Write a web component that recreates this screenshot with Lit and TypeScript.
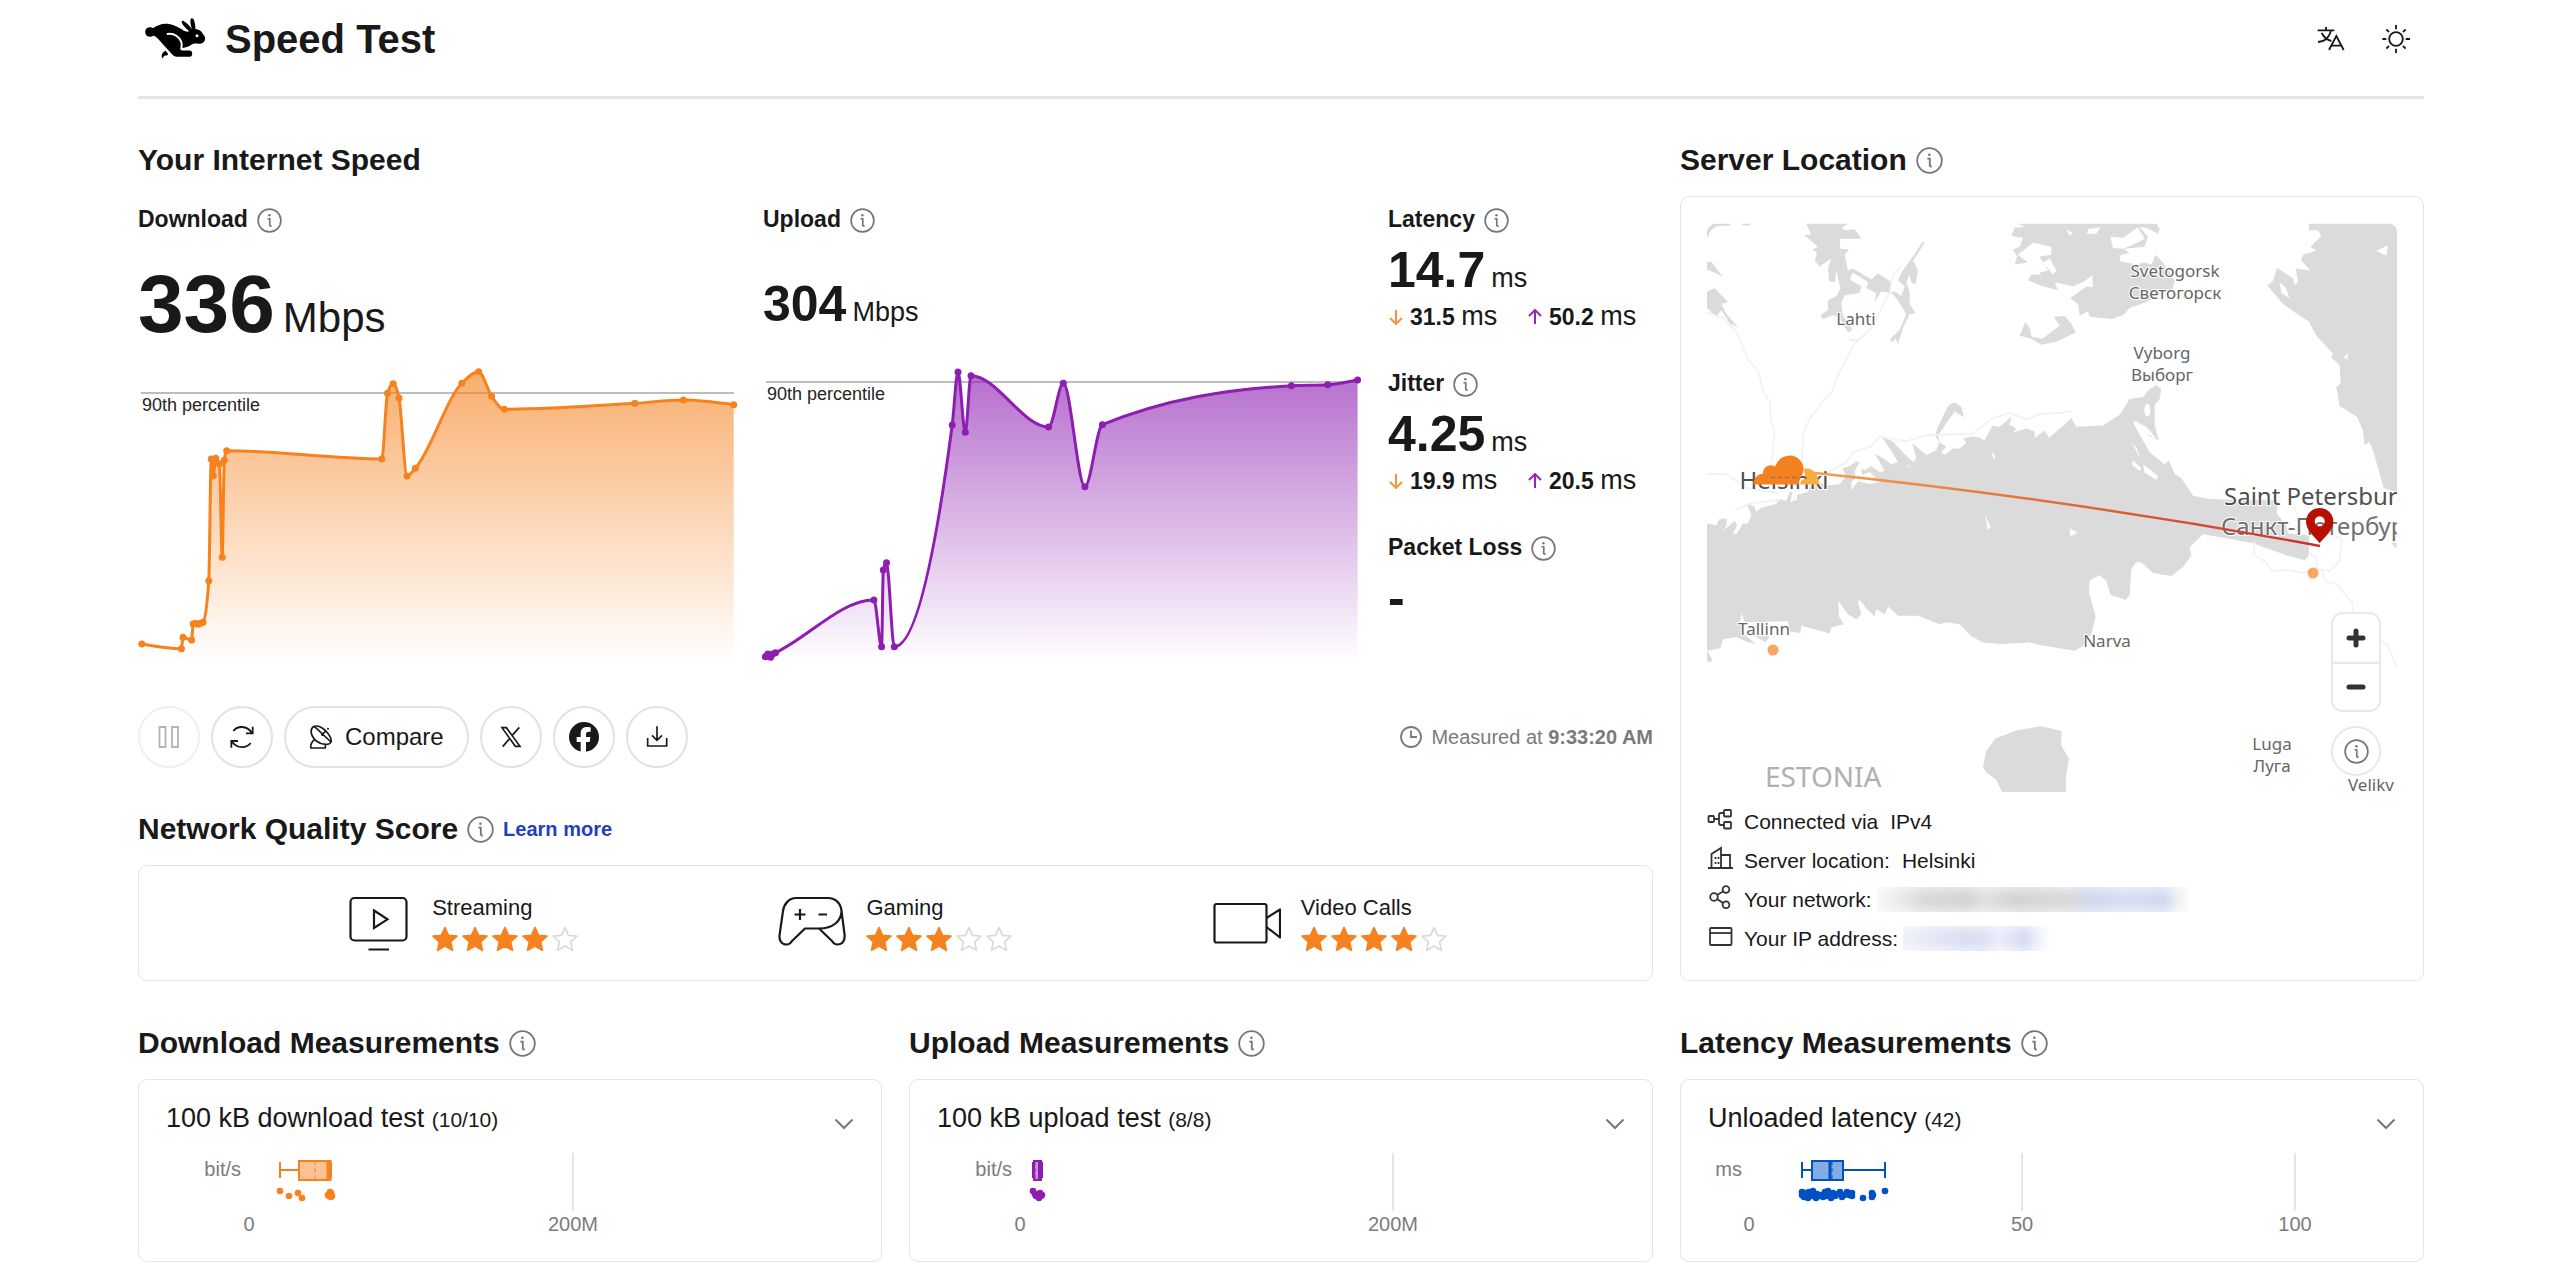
import { LitElement, html, svg, css } from "lit";
import { customElement, property } from "lit/decorators.js";

type Pt = [number, number];

/* Monotone cubic interpolation through the samples. */
function smoothPath(p: Pt[]): string {
  const n = p.length;
  const slope: number[] = [];
  for (let i = 0; i < n - 1; i++) slope.push((p[i + 1][1] - p[i][1]) / (p[i + 1][0] - p[i][0]));
  const m: number[] = new Array(n).fill(0);
  for (let i = 1; i < n - 1; i++) {
    const h0 = p[i][0] - p[i - 1][0];
    const h1 = p[i + 1][0] - p[i][0];
    const a = slope[i - 1];
    const b = slope[i];
    const mid = (a * h1 + b * h0) / (h0 + h1);
    m[i] = (Math.sign(a) + Math.sign(b)) * Math.min(Math.abs(a), Math.abs(b), 0.5 * Math.abs(mid)) || 0;
  }
  m[0] = (3 * slope[0] - m[1]) / 2;
  m[n - 1] = (3 * slope[n - 2] - m[n - 2]) / 2;
  let d = `M${p[0][0]} ${p[0][1]}`;
  for (let i = 0; i < n - 1; i++) {
    const h = (p[i + 1][0] - p[i][0]) / 3;
    d += `C${p[i][0] + h} ${p[i][1] + m[i] * h} ${p[i + 1][0] - h} ${p[i + 1][1] - m[i + 1] * h} ${p[i + 1][0]} ${p[i + 1][1]}`;
  }
  return d;
}

const DOWNLOAD: Pt[] = [
  [3.8, 278], [43.4, 282.7], [45, 271.3], [53.6, 274], [55.2, 258], [57.7, 257.3], [60.1, 258.3], [62.6, 257.3],
  [65, 256.3], [70.8, 214.7], [73.2, 93], [75.2, 109.7], [77.7, 92.3], [81.4, 98], [84.2, 191.3], [86.3, 94.3],
  [88.7, 84.7], [243.8, 93], [249.5, 27.3], [255.2, 17.7], [261, 32], [269.1, 110], [277.3, 102.3], [323.8, 17.3],
  [340.6, 5.7], [353.6, 30.3], [366.3, 43.3], [496.9, 37.3], [545.4, 34], [595.7, 38.7],
];
const UPLOAD: Pt[] = [
  [2.3, 290.7], [4.8, 288], [7.6, 291.3], [9.7, 288], [12.5, 286.7], [110.9, 234], [118.6, 280.7], [120.3, 204],
  [123.5, 196.7], [131.3, 280.7], [189.2, 59], [195, 6], [202.3, 66.3], [208, 9.7], [285.6, 61], [300.3, 17.3],
  [321.9, 120.7], [339.4, 58.7], [528.4, 19.7], [564.8, 18.7], [594.6, 14],
];

@customElement("info-button")
export class InfoButton extends LitElement {
  @property() label = "More information";
  static styles = css`
    :host { display: inline-flex; }
    .info { display: flex; width: 100%; padding: 0; border: 0; background: none; color: #767676; cursor: pointer; }
    .glyph { display: block; width: 100%; }
  `;
  render() {
    return html`<button class="info" aria-label=${this.label}>
      <svg class="glyph" viewBox="0 0 27 27" fill="none" stroke="currentColor" stroke-width="1.8">
        <circle cx="13.5" cy="13.5" r="12.3" />
        <path d="M11.3 11.6h2.5v8M13.8 19.4l2 .1" />
        <circle cx="13.4" cy="7.8" r="1.3" fill="currentColor" stroke="none" />
      </svg>
    </button>`;
  }
}

@customElement("speed-chart")
export class SpeedChart extends LitElement {
  @property({ attribute: false }) points: Pt[] = [];
  @property() color = "#f6821f";
  @property({ type: Number }) percentile = 0;
  static styles = css`
    :host { display: block; }
    .chart { display: block; width: 100%; overflow: visible; }
    .caption { font: 18px "Liberation Sans", Arial, sans-serif; fill: #262626; }
  `;
  render() {
    const p = this.points;
    const line = smoothPath(p);
    const area = `${line}L${p[p.length - 1][0]} 298L${p[0][0]} 298Z`;
    return html`<svg class="chart" viewBox="0 0 598 298">
      <defs>
        <linearGradient id="fade" gradientUnits="userSpaceOnUse" x1="0" y1="5" x2="0" y2="298">
          <stop offset="0" stop-color=${this.color} stop-opacity=".65" />
          <stop offset="1" stop-color=${this.color} stop-opacity="0" />
        </linearGradient>
      </defs>
      <path d="M3 ${this.percentile}H596" stroke="#bdbdbd" stroke-width="2" />
      <path d=${area} fill="url(#fade)" />
      <text class="caption" x="4" y=${this.percentile + 18}>90th percentile</text>
      <path d=${line} fill="none" stroke=${this.color} stroke-width="3" stroke-linejoin="round" />
      ${p.map((q) => svg`<circle cx=${q[0]} cy=${q[1]} r="3.5" fill=${this.color} />`)}
    </svg>`;
  }
}

interface Plot {
  unit: string; unitEnd: number; zero: number; ticks: [number, string][];
  low: number; q1: number; median: number; q3: number; high: number; mean: number;
  medianWidth: number; stroke: string; dots: Pt[];
}

const PLOT_DOWN: Plot = {
  unit: "bit/s", unitEnd: 75, zero: 83, ticks: [[407, "200M"]],
  low: 114, q1: 133, median: 163, q3: 164, high: 165, mean: 149, medianWidth: 5, stroke: "#f6821f",
  dots: [[114, 56], [123, 61], [132, 58], [136, 63], [162, 60], [164, 57], [165, 62], [163, 61], [166, 61], [165, 58]],
};
const PLOT_UP: Plot = {
  unit: "bit/s", unitEnd: 75, zero: 83, ticks: [[456, "200M"]],
  low: 96, q1: 97, median: 103, q3: 104, high: 105, mean: 98, medianWidth: 4, stroke: "#8d1eb1",
  dots: [[96, 56], [98, 59], [99, 61], [101, 60], [103, 58], [104, 61], [102, 63], [105, 60]],
};
const PLOT_LAT: Plot = {
  unit: "ms", unitEnd: 34, zero: 41, ticks: [[314, "50"], [587, "100"]],
  low: 94, q1: 104, median: 122, q3: 135, high: 177, mean: 124, medianWidth: 3, stroke: "#0051c3",
  dots: [
    [94, 57], [94, 60], [96, 62], [97, 58], [99, 60], [100, 63], [101, 57], [103, 61], [105, 56], [106, 60], [108, 63],
    [109, 59], [111, 61], [113, 60], [115, 62], [117, 57], [118, 61], [120, 56], [121, 60], [123, 63], [125, 58],
    [127, 61], [130, 59], [132, 57], [134, 62], [136, 60], [139, 57], [141, 60], [144, 58], [144, 61], [155, 63],
    [164, 58], [165, 60], [164, 62], [177, 56],
  ],
};

@customElement("box-plot")
export class BoxPlot extends LitElement {
  @property({ attribute: false }) plot: Plot = PLOT_DOWN;
  static styles = css`
    :host { display: block; }
    .plot { display: block; width: 100%; }
    .tick { font: 20px "Liberation Sans", Arial, sans-serif; fill: #7c7c7c; }
  `;
  render() {
    const p = this.plot;
    return html`<svg class="plot" viewBox="0 0 688 106">
      ${p.ticks.map((t) => svg`<path d="M${t[0]} 18V76" stroke="#e6e6e6" stroke-width="2" />
        <text class="tick" x=${t[0]} y="96" text-anchor="middle">${t[1]}</text>`)}
      <text class="tick" x=${p.zero} y="96" text-anchor="middle">0</text>
      <text class="tick" x=${p.unitEnd} y="41" text-anchor="end">${p.unit}</text>
      <g stroke=${p.stroke} fill="none" stroke-width="2">
        <path d="M${p.low} 27V43M${p.low} 35H${p.q1}M${p.q3} 35H${p.high}M${p.high} 27V43" />
        <rect x=${p.q1} y="26" width=${p.q3 - p.q1} height="19" fill=${p.stroke} fill-opacity=".48" />
        <path d="M${p.mean} 26V45" stroke-dasharray="4 3" stroke-width="1" />
        <path d="M${p.median} 25V46" stroke-width=${p.medianWidth} />
      </g>
      ${p.dots.map((d) => svg`<circle cx=${d[0]} cy=${d[1]} r="3.3" fill=${p.stroke} />`)}
    </svg>`;
  }
}

@customElement("server-map")
export class ServerMap extends LitElement {
  static styles = css`
    :host { display: block; position: relative; border-radius: 9px; overflow: hidden; font-family: "Noto Sans", sans-serif; }
    .map { display: block; width: 100%; }
    .place { font: 17px "Noto Sans", sans-serif; fill: #666; stroke: #fff; stroke-width: 2px; paint-order: stroke; }
    .city { font: 24px "Noto Sans", sans-serif; fill: #4f4f4f; stroke: #fff; stroke-width: 2px; paint-order: stroke; }
    .native { fill: #707070; }
    .country { font: 28px "Noto Sans", sans-serif; fill: #b0b0b0; }
    .controls { position: absolute; right: 16px; bottom: 16px; display: flex; flex-direction: column; gap: 14px; }
    .zoom { display: flex; flex-direction: column; border: 2px solid #e8e8e8; border-radius: 12px; background: #fff; overflow: hidden; }
    .step { display: flex; align-items: center; justify-content: center; width: 46px; height: 48px; padding: 0; border: 0; background: #fff; color: #333; }
    .step + .step { border-top: 2px solid #e8e8e8; }
    .step svg { width: 20px; height: 20px; }
    .about { display: flex; align-items: center; justify-content: center; width: 50px; height: 50px; box-sizing: border-box; border: 2px solid #e8e8e8; border-radius: 50%; background: #fff; }
    .about info-button { width: 25px; }
  `;
  render() {
    return html`<svg class="map" viewBox="0 0 690 569">
        <defs>
          <linearGradient id="route" gradientUnits="userSpaceOnUse" x1="100" y1="0" x2="613" y2="0">
            <stop offset="0" stop-color="#f9a04b" /><stop offset=".5" stop-color="#dd6c3f" /><stop offset="1" stop-color="#c4312c" />
          </linearGradient>
        </defs>
        <rect width="690" height="569" fill="#fff" />
        <g transform="translate(-27.3 -33.6) scale(.3333 .3954)" fill="#dbdbdb" stroke-linejoin="round">
          <path d="M82 845L110 850L118 835L140 832L142 848L130 862L150 850L165 838L172 850L160 870L170 872L190 845L205 845L215 822L200 795L225 802L228 815L245 805L290 795L300 783L320 788L330 765L338 765L332 790L352 785L352 772L385 765L390 750L412 740L450 748L480 745L500 725L488 705L510 700L530 688L540 690L525 712L528 730L515 740L515 760L535 738L570 745L598 740L570 715L548 722L545 705L555 710L575 700L600 715L615 712L600 690L585 668L610 680L635 695L655 690L630 655L605 625L640 638L675 670L700 690L710 680L698 642L740 672L770 660L778 640L766 622L775 600L800 556Q812 538 828 540L845 550L853 577L825 562L805 585L785 610L775 625L780 640L800 650L785 665L795 672L820 655L840 655L860 640L850 630L880 625L900 628L915 635L938 598L960 600L995 575L990 595L1010 605L1000 615L1040 605L1065 612L1065 628L1095 610L1108 628L1130 612L1155 595L1175 578L1190 600L1270 597L1320 570L1350 530L1390 525L1410 505L1430 495L1445 505L1440 530L1425 545L1425 595L1437 635L1405 622L1370 585L1360 590L1410 665L1455 695L1468 685L1485 720L1505 730L1540 775L1580 782L1640 785L1795 785L1792 820L1820 850L1825 870L1888 875L1888 925L1875 938L1820 925L1720 895L1640 882L1570 872L1530 905L1535 925L1510 955L1475 978L1445 974L1420 970L1385 943L1370 943L1355 960L1350 1025L1338 1038L1292 1025L1280 990L1258 975L1230 990L1228 1020L1248 1080L1235 1125L1210 1155L1185 1167L1080 1152L1050 1146L965 1150L910 1146L875 1130L840 1100L800 1095L780 1100L715 1078L655 1078L625 1055L615 1075L590 1062L585 1080L560 1060L540 1038L535 1045L545 1075L530 1087L505 1075L475 1040L478 1080L492 1100L455 1108L450 1123L365 1103L362 1122L330 1118L325 1092L195 1095L185 1072L180 1100L200 1130L230 1150L205 1145L170 1132L130 1138L122 1160L82 1167Z" />
          <path d="M82 1167L98 1188L92 1197L82 1192Z M225 1130L258 1145L270 1130Z" />
          <path d="M1888 87H2160V768L2112 755L2080 660L2068 638L2055 647L2050 610L2032 575L1980 548L1970 500L1983 490L1980 445L1955 425L1960 415L1910 370L1888 335L1810 290L1763 243L1780 232L1792 198L1840 225L1845 242L1855 235L1848 200L1892 205L1865 180L1870 165L1910 155L1892 145L1925 118L1915 103L1888 103Z" />
          <path d="M1015 87H1430L1440 100L1435 112L1400 97L1380 95L1405 120L1395 145L1335 150L1320 143L1350 160L1320 168L1322 182L1370 190L1395 185L1415 190L1428 165L1450 185L1485 230L1480 250L1400 285L1350 300L1330 318L1295 328L1230 322L1225 308L1200 320L1195 290L1172 275L1220 245L1262 250L1298 268L1296 284L1270 282L1240 250L1238 217L1210 235L1180 245L1125 235L1135 255L1090 245L1045 230L1055 215L1085 215L1045 185L1005 190L1012 170L1000 152L1020 145L1030 122L995 118L1005 97L1035 95Z" />
          <path d="M1292 120L1330 122L1375 96L1395 125L1360 140L1330 150L1300 148Z M1015 165L1060 135L1115 145L1115 165L1080 170L1105 205L1080 210Z M1090 185L1110 175L1130 205L1120 215Z M1225 100L1262 96L1250 112L1222 112Z M1160 100L1180 110L1170 118Z" fill="#fff" />
          <path d="M1020 370L1037 335L1050 350L1055 372L1088 378L1140 345L1122 322L1155 320L1175 340L1188 362L1130 385L1085 393L1055 378L1030 372Z" />
          <path d="M380 87H505L485 98L500 103L525 100L545 125L480 125L482 150L508 152L495 165L505 205L520 200L575 228L595 212L635 235L630 262L605 258L585 285L590 262L560 250L565 235L520 210L510 228L545 245L540 262L495 268L485 285L490 320L518 355L505 362L480 325L460 318L430 328L422 318L445 305L445 280L470 270L482 250L470 205L465 235L448 232L445 200L455 175L420 195L405 180L412 160L398 152L415 145L372 115L395 115L385 97Z" />
          <path d="M735 133L720 155L700 180L715 205L708 240L695 235L690 215L680 235L690 260L690 290L708 313L690 315L670 350L655 393L648 378L635 388L632 378L660 355L680 315L650 275L630 258L650 260L665 270L675 245L655 230L665 210L700 170L728 133Z" />
          <path d="M82 258L105 250L145 285L125 290L140 315L175 348L150 340L125 305L110 322L82 300Z M82 185L95 183L130 222L110 212L82 203Z M82 125V100L100 87H152L150 91L112 93L92 105Z M185 87H212V91H190Z" />
          <path d="M968 1526L950 1493L920 1475L910 1460L920 1420L948 1388L1015 1367L1085 1358L1146 1370L1144 1405L1168 1440L1160 1480L1158 1526Z" />
          <path d="M2135 895L2150 892V908Z" />
          <g fill="#fff">
            <path d="M935 662L948 675L942 682Z M915 822L933 855L925 862Z M1170 857L1193 868L1172 878Z M1355 640L1372 655L1382 684L1366 655Z M1358 685L1385 705L1380 712L1358 697Z M1390 695L1435 725L1430 735L1395 716Z M680 695L700 705L685 700Z M1376 590L1400 600L1432 632L1398 616Z" />
            <ellipse cx="1403" cy="558" rx="9" ry="16" />
            <path d="M2090 155L2125 142L2120 168Z M1992 425L2005 413L2003 430Z M1800 235L1818 248L1830 275L1805 262Z" />
          </g>
          <g fill="none" stroke="#f2f2f2" stroke-width="5">
            <path d="M82 312L130 325L170 360L205 430L235 460L250 510L272 540V575L285 615L275 690" />
            <path d="M665 195L640 215L630 260L590 325L570 355L525 390L480 460L455 515L430 535L390 580L372 615L366 690M508 380H540" />
            <path d="M440 720L500 690L520 665L575 650L600 625L680 637L740 622L880 618L935 580L990 565L1040 582L1080 568L1150 565L1175 560" />
            <path d="M82 720L140 720L200 755L295 768M165 810L210 795L300 785" />
            <path d="M1725 890L1723 925L1755 940L1780 965L1820 962L1870 970L1888 965L1912 955L1910 930L1888 920M1912 960L1950 965L1980 940L1987 885L1960 875M1840 800L1870 850M1925 965L1940 992L1970 998L2018 1045L2020 1075M2102 1143L2122 1150L2150 1205" />
          </g>
        </g>
        <g text-anchor="middle">
          <text class="place" x="149" y="102">Lahti</text>
          <text class="place" x="468" y="54">Svetogorsk</text>
          <text class="place" x="468" y="76">Светогорск</text>
          <text class="place" x="455" y="136">Vyborg</text>
          <text class="place" x="455" y="158">Выборг</text>
          <text class="place" x="400" y="424">Narva</text>
          <text class="place" x="57" y="412">Tallinn</text>
          <text class="place" x="565" y="527">Luga</text>
          <text class="place" x="565" y="549">Луга</text>
          <text class="city" x="77" y="266">Helsinki</text>
        </g>
        <text class="place" x="641" y="568">Velikv</text>
        <text class="city" x="517" y="282">Saint Petersburg</text>
        <text class="city native" x="514" y="312">Санкт-Петербург</text>
        <text class="country" x="58" y="564">ESTONIA</text>
        <circle cx="66" cy="427" r="5.5" fill="#fba661" />
        <circle cx="606" cy="350" r="5.5" fill="#fba661" />
        <path d="M108 250Q360 276 613 323" fill="none" stroke="url(#route)" stroke-width="2.4" />
        <path d="M46.500 261.400C46.500 254.500 51 251 56 250.800C56 243 63 240.500 68 243.500C71 236.500 76 232.500 83 232.500C90 232.500 96.600 238.500 96.600 246C96.600 250 95 252.500 92.500 256L91.500 261.400Z" fill="#f48120" />
        <path d="M64 254.500L90 254.500" stroke="#8d6a50" stroke-width="1.500" stroke-dasharray="4 3" opacity=".7" />
        <path d="M93.500 261.400C93 257.500 96 255.500 101 255.300C96.500 253.500 98 251 97 245.800C105 244.500 112 250.500 112 261.400Z" fill="#faad3f" />
        <path fill="#b90f03" fill-rule="evenodd" d="M612.700 320C607 313.500 599 307 599 298.800A13.700 13.700 0 0 1 626.400 298.800C626.400 307 618.500 313.500 612.700 320ZM612.700 293.300a5 5 0 1 0 .01 0Z" />
      </svg>
      <div class="controls">
        <div class="zoom">
          <button class="step" aria-label="Zoom in"><svg viewBox="0 0 20 20" stroke="currentColor" stroke-width="5" stroke-linecap="round"><path d="M10 3V17M3 10H17" /></svg></button>
          <button class="step" aria-label="Zoom out"><svg viewBox="0 0 20 20" stroke="currentColor" stroke-width="5" stroke-linecap="round"><path d="M3 10H17" /></svg></button>
        </div>
        <div class="about"><info-button label="Map attribution"></info-button></div>
      </div>`;
  }
}

const STAR = "M12 1.500L15.200 8.600L23 9.400L17.200 14.600L18.900 22.500L12 18.500L5.100 22.500L6.800 14.600L1 9.400L8.800 8.600Z";

@customElement("app-root")
export class AppRoot extends LitElement {
  static styles = css`
    :host { display: block; min-height: 100vh; background: #fff; color: #191919; font-family: "Liberation Sans", Arial, sans-serif; }
    .page { padding: 0 136px 18px 138px; }
    .top { display: flex; align-items: center; justify-content: space-between; height: 96px; padding-bottom: 18px; box-sizing: border-box; }
    .bar { border-bottom: 3px solid #e5e5e5; }
    .brand { display: flex; align-items: center; gap: 5px; padding-left: 2px; }
    .rabbit { display: block; width: 80px; height: 60px; }
    h1, h2, h3 { margin: 0; font-weight: 700; }
    h1 { font-size: 40px; line-height: 44px; }
    h2 { font-size: 30px; line-height: 36px; }
    h3 { font-size: 23px; line-height: 30px; }
    .tools { display: flex; gap: 10px; }
    .tool { display: flex; align-items: center; justify-content: center; width: 56px; height: 48px; padding: 0; border: 0; background: none; color: #191919; }
    .tool svg { width: 30px; height: 30px; }
    .columns { display: grid; grid-template-columns: repeat(3, minmax(0, 1fr)); column-gap: 27px; }
    .overview { padding-top: 43px; }
    .wide { grid-column: span 2; display: flex; flex-direction: column; }
    .side { display: flex; flex-direction: column; gap: 18px; }
    .heading { display: flex; align-items: center; gap: 9px; }
    .heading info-button { width: 27px; }
    .more { font-size: 20px; font-weight: 700; color: #1f3fbf; text-decoration: none; }
    .speeds { display: grid; grid-template-columns: minmax(0, 1fr) minmax(0, 1fr) 265px; column-gap: 27px; margin-top: 26px; }
    .label { display: flex; align-items: center; gap: 9px; }
    .label info-button { width: 25px; height: 25px; padding-top: 3px; }
    .reading { display: flex; align-items: center; height: 132px; padding-top: 8px; box-sizing: border-box; }
    .value { display: flex; align-items: baseline; gap: 6px; height: 51px; font-size: 50px; line-height: 51px; }
    .value.large { gap: 8px; height: 84px; font-size: 82px; line-height: 84px; }
    .unit { font-size: 27px; line-height: 24px; }
    .large .unit { font-size: 42px; }
    .timings { display: flex; flex-direction: column; gap: 36px; }
    .timing .value { margin-top: 11px; }
    .split { display: grid; grid-template-columns: 139px auto; justify-content: start; height: 30px; margin-top: 6px; line-height: 30px; font-size: 23px; }
    .way { display: flex; align-items: baseline; gap: 6px; }
    .arrow { width: 16px; height: 16px; }
    .down { color: #f9923c; }
    .up { color: #9427b8; }
    .actions { display: flex; align-items: center; justify-content: space-between; margin-top: 42px; }
    .buttons { display: flex; gap: 11px; }
    .pill { display: flex; align-items: center; justify-content: center; gap: 12px; min-width: 62px; height: 62px; padding: 0; box-sizing: border-box; border: 2px solid #e2e2e2; border-radius: 31px; background: #fff; color: #191919; font: 24px "Liberation Sans", Arial, sans-serif; }
    .pill svg { display: block; width: 24px; height: 24px; }
    .pill.compare { padding: 0 23px; }
    .pill .face { width: 30px; height: 30px; }
    .pill:disabled { border-color: #f0f0f0; color: #b4b4b4; }
    .measured { display: flex; align-items: center; gap: 8px; font-size: 20px; color: #7a7a7a; }
    .measured svg { width: 24px; height: 24px; }
    .quality { margin-top: 43px; }
    .card { border: 1px solid #e5e5e5; border-radius: 9px; box-sizing: border-box; background: #fff; }
    .scores { display: grid; grid-template-columns: repeat(3, minmax(0, 1fr)); align-items: center; height: 116px; margin-top: 18px; padding: 0 105px; }
    .score { display: flex; align-items: center; justify-content: center; gap: 20px; }
    .kind { width: 68px; height: 60px; }
    .rating { display: flex; flex-direction: column; gap: 4px; font-size: 22px; line-height: 28px; }
    .stars { display: flex; gap: 4px; }
    .star { width: 26px; height: 26px; fill: #fff; stroke: #dadada; stroke-width: 1.6; stroke-linejoin: round; }
    .star.on { fill: #f6821f; stroke: #f6821f; }
    .location { flex: 1; padding: 26px 26px 20px; }
    .facts { display: flex; flex-direction: column; margin: 10px 0 0; padding: 0; list-style: none; font-size: 21px; line-height: 39px; }
    .fact { display: flex; align-items: center; }
    .fact svg { flex: none; width: 26px; height: 26px; margin: 0 11px 5px 0; }
    .fact .known { padding-left: 12px; }
    .hidden { display: block; height: 25px; margin-left: 5px; }
    .network { width: 311px; background: linear-gradient(#fff6, #fff0 40%, #fff0 60%, #fff6), linear-gradient(90deg, #f7f7f7, #e9e9e9 8%, #dadada 15%, #d4d4d4 28%, #e0e0e0 35%, #d4d4d4 45%, #dadada 60%, #d2d8ee 70%, #d9def2 80%, #d2d9f0 92%, #f1f1f3 97%, #fafafa); }
    .address { width: 148px; background: linear-gradient(#fff6, #fff0 40%, #fff0 60%, #fff6), linear-gradient(90deg, #f0f2fa, #e4e8f7 20%, #d9dff2 42%, #dce1f4 55%, #eaedf8 65%, #d6dcf2 82%, #f5f6fc 94%, #fff); }
    .measures { margin-top: 44px; }
    .measure { display: flex; flex-direction: column; gap: 18px; }
    .test { padding: 23px 27px 20px; }
    .summary { display: flex; align-items: center; justify-content: space-between; height: 32px; font-size: 27px; line-height: 32px; }
    .count { font-size: 21px; }
    .expand { display: flex; padding: 9px 0 0; border: 0; background: none; color: #777; }
    .expand svg { width: 20px; height: 12px; }
  `;

  private score(name: string, stars: number, icon: unknown) {
    return html`<div class="score">
      ${icon}
      <div class="rating">
        <span>${name}</span>
        <div class="stars" role="img" aria-label="${stars} of 5">
          ${[1, 2, 3, 4, 5].map((i) => html`<svg class="star ${i <= stars ? "on" : ""}" viewBox="0 0 24 24"><path d=${STAR} /></svg>`)}
        </div>
      </div>
    </div>`;
  }

  private timing(name: string, value: string, down?: string, up?: string) {
    return html`<div class="timing">
      <div class="label"><h3>${name}</h3><info-button></info-button></div>
      <div class="value"><b>${value}</b>${down ? html`<span class="unit">ms</span>` : ""}</div>
      ${down
        ? html`<div class="split">
            <span class="way"><svg class="arrow down" viewBox="0 0 16 16" fill="none" stroke="currentColor" stroke-width="2"><path d="M8 1V14.500M2 9L8 15L14 9" /></svg><span><b>${down}</b> <span class="unit">ms</span></span></span>
            <span class="way"><svg class="arrow up" viewBox="0 0 16 16" fill="none" stroke="currentColor" stroke-width="2"><path d="M8 15V1.500M2 7L8 1L14 7" /></svg><span><b>${up}</b> <span class="unit">ms</span></span></span>
          </div>`
        : ""}
    </div>`;
  }

  private measure(title: string, name: string, count: string, plot: Plot) {
    return html`<section class="measure">
      <div class="heading"><h2>${title}</h2><info-button></info-button></div>
      <div class="card test">
        <div class="summary">
          <span>${name} <span class="count">(${count})</span></span>
          <button class="expand" aria-label="Expand ${name}"><svg viewBox="0 0 20 12" fill="none" stroke="currentColor" stroke-width="2"><path d="M1.500 1.500L10 10L18.500 1.500" /></svg></button>
        </div>
        <box-plot .plot=${plot}></box-plot>
      </div>
    </section>`;
  }

  render() {
    return html`
      <div class="page">
        <header class="bar">
          <div class="top">
            <div class="brand">
              <svg class="rabbit" viewBox="0 0 240 180">
                <circle cx="30" cy="69" r="14.500" />
                <path d="M36 60C50 48 70 42 86 45C108 48 122 60 136 67C142 69 146 68 147 66C136 58 127 48 125 40C125 34 130 35 134 38C144 44 152 54 156 61C151 47 150 36 152 30C155 25 160 28 162 34C166 44 166 54 166 60C176 61 186 66 189 76C196 82 197 90 193 97C190 103 184 105 176 104C168 103 160 102 154 107C148 112 134 116 124 117C120 118 120 121 124 124C132 126 144 123 152 125C159 128 158 142 150 143.500H112C104 144 98 138 92 131L60 96C52 86 44 80 36 79Z" />
                <path d="M83 75C104 72 120 86 124 99C126 106 126 112 124 118" fill="none" stroke="#fff" stroke-width="6" stroke-linecap="round" />
                <circle cx="171" cy="80" r="4.500" fill="#fff" />
                <path d="M66 148C63 138 66 130 76 125C84 132 86 136 82 139C74 139 70 142 68 148Z" />
              </svg>
              <h1>Speed Test</h1>
            </div>
            <div class="tools">
              <button class="tool" aria-label="Language">
                <svg viewBox="101 74 90 90" fill="none" stroke="currentColor" stroke-width="5.500"><path d="M109 93H159M134 83V93M149 94C144 112 132 127 110 128M121 101C128 114 138 122 150 125M143 152L165 110L187 152M150 139H180" /></svg>
              </button>
              <button class="tool" aria-label="Theme">
                <svg viewBox="299 74 90 90" fill="none" stroke="currentColor" stroke-width="5.500"><circle cx="344" cy="119" r="20.500" /><path d="M344 77V90M344 148V161M303 119H315M373 119H386M315 90L323 98M365 140L373 148M373 90L365 98M323 140L315 148" /></svg>
              </button>
            </div>
          </div>
        </header>

        <div class="columns overview">
          <div class="wide">
            <h2>Your Internet Speed</h2>
            <div class="speeds">
              <section>
                <div class="label"><h3>Download</h3><info-button></info-button></div>
                <div class="reading"><div class="value large"><b>336</b><span class="unit">Mbps</span></div></div>
                <speed-chart .points=${DOWNLOAD} color="#f6821f" percentile="27"></speed-chart>
              </section>
              <section>
                <div class="label"><h3>Upload</h3><info-button></info-button></div>
                <div class="reading"><div class="value"><b>304</b><span class="unit">Mbps</span></div></div>
                <speed-chart .points=${UPLOAD} color="#8d1eb1" percentile="16"></speed-chart>
              </section>
              <section class="timings">
                ${this.timing("Latency", "14.7", "31.5", "50.2")}
                ${this.timing("Jitter", "4.25", "19.9", "20.5")}
                ${this.timing("Packet Loss", "-")}
              </section>
            </div>

            <div class="actions">
              <div class="buttons">
                <button class="pill" disabled aria-label="Pause"><svg viewBox="0 0 24 24" fill="none" stroke="currentColor" stroke-width="1.800"><path d="M2.500 2H8.500V22H2.500ZM15 2H21V22H15Z" /></svg></button>
                <button class="pill" aria-label="Retest"><svg viewBox="56 76 72 72" fill="none" stroke="currentColor" stroke-width="5.500"><path d="M66 94C78 78 106 76 122 100M104 101H124V81M118 130C106 146 78 148 62 126M80 124H60V144" /></svg></button>
                <button class="pill compare"><svg viewBox="300 76 72 72" fill="none" stroke="currentColor" stroke-width="5" stroke-linejoin="round"><path d="M316 80C302 86 303 108 322 124C340 138 362 136 366 127ZM316 80C328 76 344 86 354 98C364 110 368 120 366 127M337 107L352 92M316 120C308 126 305 134 305 145H349V136" /><circle cx="357" cy="87" r="3" fill="currentColor" stroke="none" /></svg>Compare</button>
                <button class="pill" aria-label="Share on X"><svg viewBox="869 75 72 72" fill="none" stroke="currentColor" stroke-width="5"><path d="M878 83H891L932 139H918ZM930 82L908 107M901 116L880 140" /></svg></button>
                <button class="pill" aria-label="Share on Facebook"><svg class="face" viewBox="1079 66 90 90"><circle cx="1124" cy="111" r="45" fill="currentColor" /><path d="M1114 157V126H1102V111H1114V100C1114 88 1121 81 1132 81C1138 81 1144 82 1144 82V95H1138C1132 95 1130 99 1130 103V111H1143L1141 126H1130V157Z" fill="#fff" /></svg></button>
                <button class="pill" aria-label="Download results"><svg viewBox="1308 76 72 72" fill="none" stroke="currentColor" stroke-width="5"><path d="M1316 115V139H1373V115M1344 80V121M1329 107L1344 122L1359 107" /></svg></button>
              </div>
              <div class="measured">
                <svg viewBox="0 0 24 24" fill="none" stroke="currentColor" stroke-width="1.800"><circle cx="12" cy="12" r="10" /><path d="M12 5.500V12H18" /></svg>
                <span>Measured at <b>9:33:20 AM</b></span>
              </div>
            </div>

            <section class="quality">
              <div class="heading"><h2>Network Quality Score</h2><info-button></info-button><a class="more" href="#quality">Learn more</a></div>
              <div class="card scores">
                ${this.score("Streaming", 4, html`<svg class="kind" viewBox="344 894 68 60" fill="none" stroke="#191919" stroke-width="2.200"><rect x="350.500" y="899" width="56" height="42.500" rx="4" /><path d="M374 911.500L387.500 920.300L374 929Z M368.500 950.500H389" /></svg>`)}
                ${this.score("Gaming", 3, html`<svg class="kind" viewBox="779 894 68 60" fill="none" stroke="#191919" stroke-width="2.200" stroke-linejoin="round"><path d="M797 899H829C837 899 842 905 842.500 912L845.500 935C846.500 942 843 945.500 838.500 945.500C836 945.500 834.500 944.500 833 942L820 929.500H806L793 942C791.500 944.500 790 945.500 787.500 945.500C783 945.500 779.500 942 780.700 935L784 912C785 905 790 899 797 899ZM842.500 912C842.500 922 834 929.500 820 929.500M801 910V921M795.500 915.500H806.500M819.500 915.500H828" /></svg>`)}
                ${this.score("Video Calls", 4, html`<svg class="kind" viewBox="1216 892 68 60" fill="none" stroke="#191919" stroke-width="2.200" stroke-linejoin="round"><rect x="1217.500" y="903" width="52" height="38.500" rx="2" /><path d="M1269.500 917L1283 908.500V936.500L1269.500 926" /></svg>`)}
              </div>
            </section>
          </div>

          <section class="side">
            <div class="heading"><h2>Server Location</h2><info-button></info-button></div>
            <div class="card location">
              <server-map></server-map>
              <ul class="facts">
                <li class="fact"><svg viewBox="1707 806 26 26" fill="none" stroke="#333" stroke-width="1.800"><rect x="1708.500" y="816" width="5.500" height="6" rx="1" /><rect x="1724" y="810" width="7" height="6.500" rx="1" /><rect x="1724" y="822" width="7" height="6.500" rx="1" /><path d="M1714 819H1719M1724 813H1721Q1719 813 1719 815V823Q1719 825 1721 825H1724" /></svg>Connected via<span class="known">IPv4</span></li>
                <li class="fact"><svg viewBox="1707 844 26 26" fill="none" stroke="#333" stroke-width="1.800"><path d="M1708 867H1733M1711.500 867V853L1721 847V867M1721 854H1730V867" /><path d="M1715.500 856V864M1718.500 856V864" stroke-dasharray="2 3" /></svg>Server location:<span class="known">Helsinki</span></li>
                <li class="fact"><svg viewBox="1707 883 26 26" fill="none" stroke="#333" stroke-width="1.800"><circle cx="1714" cy="896" r="3.800" /><circle cx="1726" cy="888.500" r="3.400" /><circle cx="1726" cy="903.800" r="3.400" /><path d="M1717 894L1723 890.500M1717 898L1723 902" /></svg>Your network:<span class="hidden network"></span></li>
                <li class="fact"><svg viewBox="1707 922 26 26" fill="none" stroke="#333" stroke-width="1.800"><rect x="1710" y="927" width="21.500" height="17" rx="1" /><path d="M1710 932H1731.500" /></svg>Your IP address:<span class="hidden address"></span></li>
              </ul>
            </div>
          </section>
        </div>

        <div class="columns measures">
          ${this.measure("Download Measurements", "100 kB download test", "10/10", PLOT_DOWN)}
          ${this.measure("Upload Measurements", "100 kB upload test", "8/8", PLOT_UP)}
          ${this.measure("Latency Measurements", "Unloaded latency", "42", PLOT_LAT)}
        </div>
      </div>
    `;
  }
}
